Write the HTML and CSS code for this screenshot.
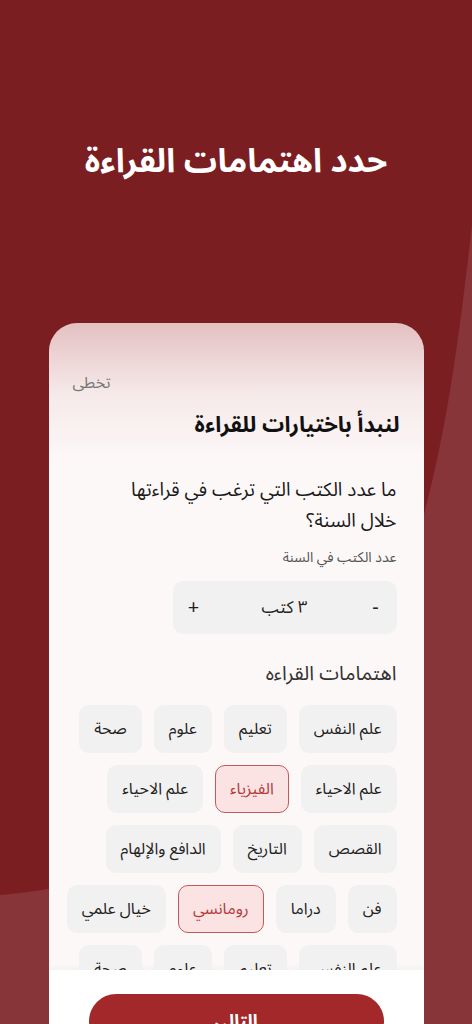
FILE: index.html
```html
<!DOCTYPE html>
<html lang="ar" dir="rtl">

<head>
    <meta charset="UTF-8">
    <meta name="viewport" content="width=device-width, initial-scale=1.0">
    <title>اهتمامات القراءة</title>
    <link rel="stylesheet" href="styles.css">
</head>

<body>
    <div class="screen">
        <h1 class="page-title">حدد اهتمامات القراءة</h1>

        <section class="card">
            <div class="card-body">
                <a class="skip" href="#">تخطى</a>
                <h2 class="card-title">لنبدأ باختيارات للقراءة</h2>

                <p class="question">ما عدد الكتب التي ترغب في قراءتها<br>خلال السنة؟</p>
                <p class="hint">عدد الكتب في السنة</p>

                <div class="counter">
                    <button class="counter-btn">-</button>
                    <span class="counter-value">٣ كتب</span>
                    <button class="counter-btn">+</button>
                </div>

                <h3 class="section-title">اهتمامات القراءه</h3>

                <div class="chips">
                    <div class="chip-row">
                        <span class="chip">علم النفس</span>
                        <span class="chip">تعليم</span>
                        <span class="chip">علوم</span>
                        <span class="chip">صحة</span>
                    </div>
                    <div class="chip-row">
                        <span class="chip">علم الاحياء</span>
                        <span class="chip active">الفيزياء</span>
                        <span class="chip">علم الاحياء</span>
                    </div>
                    <div class="chip-row">
                        <span class="chip">القصص</span>
                        <span class="chip">التاريخ</span>
                        <span class="chip">الدافع والإلهام</span>
                    </div>
                    <div class="chip-row">
                        <span class="chip">فن</span>
                        <span class="chip">دراما</span>
                        <span class="chip active">رومانسي</span>
                        <span class="chip">خيال علمي</span>
                    </div>
                    <div class="chip-row">
                        <span class="chip">علم النفس</span>
                        <span class="chip">تعليم</span>
                        <span class="chip">علوم</span>
                        <span class="chip">صحة</span>
                    </div>
                </div>
            </div>

            <div class="card-foot">
                <button class="next-btn">التالي</button>
            </div>
        </section>
    </div>
</body>

</html>
```

FILE: styles.css
```css
* {
    margin: 0;
    padding: 0;
    box-sizing: border-box;
}

body {
    font-family: "Noto Sans Arabic", "Noto Kufi Arabic", "DejaVu Sans", sans-serif;
    background: #7b1e21;
}

button {
    font-family: inherit;
    border: none;
    background: none;
    cursor: pointer;
}

.screen {
    display: flex;
    flex-direction: column;
    align-items: center;
    width: 472px;
    height: 1024px;
    overflow: hidden;
    background-color: #7b1e21;
    background-image: url("data:image/svg+xml,%3Csvg xmlns='http://www.w3.org/2000/svg' width='472' height='1024'%3E%3Cpath d='M472 225 C440 500 400 860 0 895 L0 1024 L472 1024 Z' fill='%23873538'/%3E%3C/svg%3E");
    background-repeat: no-repeat;
}

.page-title {
    margin-top: 138px;
    height: 48px;
    color: #fff;
    font-size: 33px;
    font-weight: bold;
    line-height: 48px;
}

.card {
    flex-shrink: 0;
    width: 375px;
    margin-top: 137px;
    border-radius: 28px 28px 0 0;
    overflow: hidden;
    background: linear-gradient(#e4c0c1 0, #f6e9e9 70px, #fdf8f8 140px);
}

.card-body {
    display: flex;
    flex-direction: column;
    height: 647px;
    padding: 48px 27px 0 20px;
    overflow: hidden;
}

.card-body > * {
    flex-shrink: 0;
}

.skip {
    align-self: flex-end;
    margin-left: 4px;
    color: #777;
    font-size: 16px;
    line-height: 24px;
    text-decoration: none;
}

.card-title {
    margin-top: 12px;
    margin-right: -3px;
    color: #111;
    font-size: 22px;
    font-weight: bold;
    line-height: 36px;
}

.question {
    margin-top: 32px;
    color: #1a1a1a;
    font-size: 19px;
    line-height: 31px;
}

.hint {
    margin-top: 10px;
    color: #555;
    font-size: 14px;
    line-height: 22px;
}

.counter {
    display: flex;
    align-items: center;
    justify-content: space-between;
    width: 224px;
    height: 53px;
    margin-top: 12px;
    padding: 0 13px;
    background: #f2f1f1;
    border-radius: 10px;
}

.counter-btn {
    width: 16px;
    color: #222;
    font-size: 20px;
}

.counter-value {
    color: #222;
    font-size: 17px;
}

.section-title {
    margin-top: 25px;
    color: #333;
    font-size: 20px;
    font-weight: normal;
    line-height: 30px;
}

.chips {
    display: flex;
    flex-direction: column;
    gap: 12px;
    margin-top: 16px;
}

.chip-row {
    display: flex;
    gap: 12px;
}

.chip {
    display: flex;
    flex-shrink: 0;
    align-items: center;
    height: 48px;
    padding: 0 14px;
    background: #f2f1f1;
    border: 1px solid #f2f1f1;
    border-radius: 10px;
    color: #222;
    font-size: 16px;
}

.chip.active {
    background: #fbe3e3;
    border: 1.5px solid #c05a5a;
    color: #b23a3c;
}

.card-foot {
    height: 110px;
    padding: 24px 40px 0 40px;
    background: #fff;
    box-shadow: 0 -2px 6px rgba(0, 0, 0, 0.04);
}

.next-btn {
    width: 100%;
    height: 54px;
    border-radius: 27px;
    background: #a2282a;
    color: #fff;
    font-size: 18px;
    font-weight: bold;
}
```
